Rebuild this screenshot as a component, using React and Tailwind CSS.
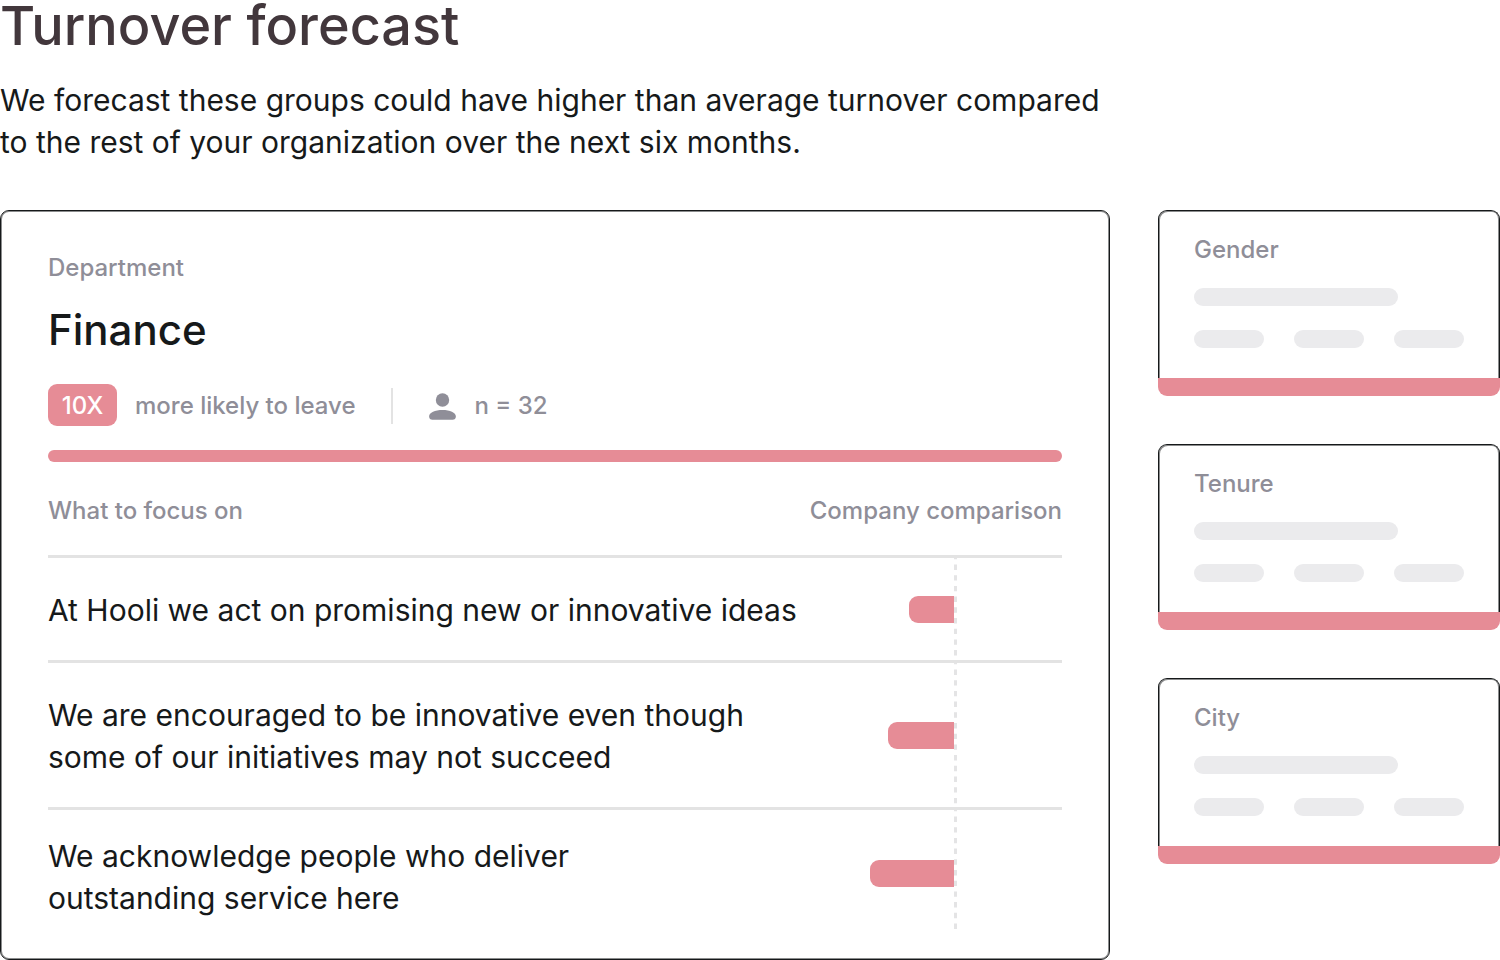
import clsx from "clsx";

const focusAreas = [
  {
    id: "ideas",
    lines: ["At Hooli we act on promising new or innovative ideas"],
    bar: 45,
  },
  {
    id: "encouraged",
    lines: [
      "We are encouraged to be innovative even though",
      "some of our initiatives may not succeed",
    ],
    bar: 66,
  },
  {
    id: "service",
    lines: ["We acknowledge people who deliver", "outstanding service here"],
    bar: 84,
  },
];

const otherGroups = ["Gender", "Tenure", "City"];

function PersonIcon() {
  return (
    <svg width="28" height="28" viewBox="0 0 28 28" fill="currentColor" aria-hidden="true">
      <circle cx="13.5" cy="8" r="6.7" />
      <path d="M0.1 24.4C0.1 20.4 6.1 17.9 13.5 17.9s13.4 2.5 13.4 6.5c0 2-1.3 3.3-3.3 3.3H3.4c-2 0-3.3-1.3-3.3-3.3Z" />
    </svg>
  );
}

// Company average marker, drawn behind the bar of one row.
function AverageLine() {
  return (
    <svg className="absolute top-0 right-[105px] h-full w-[3px]" aria-hidden="true">
      <line
        x1="1.5"
        y1="0"
        x2="1.5"
        y2="100%"
        stroke="#e4e4e5"
        strokeWidth="3"
        strokeDasharray="5.4 5.3"
        strokeDashoffset="4.2"
      />
    </svg>
  );
}

function FocusTable() {
  return (
    <table className="mt-[34px] w-full border-collapse text-left">
      <thead>
        <tr className="text-2xl leading-[30px] text-[#8f8e98]">
          <th className="pb-[29px] font-medium">What to focus on</th>
          <th className="w-[250px] pb-[29px] text-right font-medium whitespace-nowrap">
            Company comparison
          </th>
        </tr>
      </thead>
      <tbody>
        {focusAreas.map((area, i) => {
          const last = i === focusAreas.length - 1;
          return (
            <tr key={area.id} className="border-t-[3px] border-[#e3e3e3]">
              <td
                className={clsx(
                  "text-[30px] leading-[42px]",
                  last ? "pt-[25px] pb-[11px]" : "pt-[31px] pb-[29px]"
                )}
              >
                {area.lines.map((line) => (
                  <span key={line} className="block">
                    {line}
                  </span>
                ))}
              </td>
              <td className={clsx("relative pr-[108px]", last && "pt-1.5")}>
                <AverageLine />
                <div
                  className="ml-auto h-[27px] rounded-l-[9px] bg-[#e68c96]"
                  style={{ width: area.bar }}
                />
              </td>
            </tr>
          );
        })}
      </tbody>
    </table>
  );
}

function DepartmentCard() {
  return (
    <section className="min-w-0 flex-1 rounded-[9px] border border-[#16191a] px-[47px] pt-[42px] pb-[29px] shadow-[inset_0_0_0_1px_#8b8c8d]">
      <p className="text-2xl leading-[30px] font-medium text-[#8f8e98]">Department</p>
      <h2 className="mt-[22px] text-[42px] leading-[50px] font-medium">Finance</h2>

      <div className="mt-[29px] flex items-center text-2xl leading-[44px] font-medium text-[#8f8e98]">
        <span className="h-[42px] w-[69px] self-start rounded-[9px] bg-[#e68c96] text-center text-white">
          10X
        </span>
        <span className="ml-[18px]">more likely to leave</span>
        <span className="mr-9 ml-[35px] h-9 w-0.5 bg-[#e3e3e3]" />
        <PersonIcon />
        <span className="ml-[18px]">n = 32</span>
      </div>

      <div className="mt-[22px] h-3 rounded-full bg-[#e68c96]" />

      <FocusTable />
    </section>
  );
}

function GroupCard({ title }) {
  return (
    <section>
      <div className="rounded-t-[9px] border border-b-0 border-[#16191a] px-[35px] pt-6 pb-[30px] shadow-[inset_1px_1px_#8b8c8d,inset_-1px_0_#8b8c8d]">
        <h3 className="text-2xl leading-[30px] font-medium text-[#8f8e98]">{title}</h3>
        <div className="mt-[23px] h-[18px] w-[204px] rounded-full bg-[#ebebed]" />
        <div className="mt-6 flex justify-between">
          <div className="h-[18px] w-[70px] rounded-full bg-[#ebebed]" />
          <div className="h-[18px] w-[70px] rounded-full bg-[#ebebed]" />
          <div className="h-[18px] w-[70px] rounded-full bg-[#ebebed]" />
        </div>
      </div>
      <div className="h-[18px] rounded-b-[9px] bg-[#e68c96]" />
    </section>
  );
}

export default function App() {
  return (
    <main className="bg-white font-[Inter,sans-serif] text-[#16191a] [font-optical-sizing:none]">
      <header>
        <h1 className="text-[54px] leading-[52px] font-medium text-[#42373c]">Turnover forecast</h1>
        <p className="mt-[27px] max-w-[1110px] text-[30px] leading-[42px]">
          We forecast these groups could have higher than average turnover compared to the rest of
          your organization over the next six months.
        </p>
      </header>

      <div className="mt-[47px] flex items-start gap-12">
        <DepartmentCard />
        <aside className="flex w-[342px] shrink-0 flex-col gap-12">
          {otherGroups.map((title) => (
            <GroupCard key={title} title={title} />
          ))}
        </aside>
      </div>
    </main>
  );
}
